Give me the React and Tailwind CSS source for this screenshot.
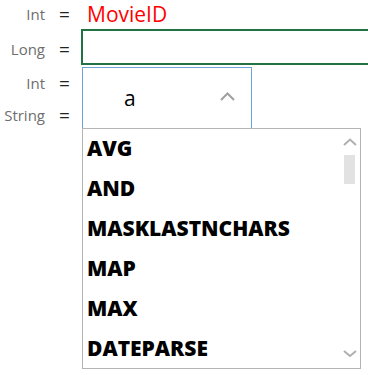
import React from "react";

function Label({ children }) {
  return (
    <div className="flex items-center">
      <div className="w-[45px] text-right text-[15px] text-[#6e6e6e]">{children}</div>
      <div className="w-[36px] pl-[14px] text-[19px] leading-none text-[#222]">=</div>
    </div>
  );
}

export default function App() {
  return (
    <div className="relative h-[375px] w-[368px] overflow-hidden bg-white font-['Open_Sans',sans-serif]">
      <div className="flex h-[29px] items-center">
        <Label>Int</Label>
        <div className="pl-[6px] text-[21px] leading-none text-[#ff0000]">MovieID</div>
      </div>
      <div className="flex h-[36px] items-center">
        <div className="pt-[4px]"><Label>Long</Label></div>
        <div className="h-[36px] flex-1 border-2 border-r-0 border-[#217346]" />
      </div>
      <div className="mt-[2px] flex">
        <div className="flex flex-col">
          <div className="flex h-[32px] items-center"><Label>Int</Label></div>
          <div className="flex h-[33px] items-center"><Label>String</Label></div>
        </div>
        <div className="ml-[1px] flex h-[70px] w-[170px] items-start border border-[#6aa3d5]">
          <div className="flex h-[60px] w-full items-center">
            <span className="ml-[41px] text-[21px] leading-none text-black">a</span>
            <svg className="ml-auto mr-[16px] mt-[-4px]" width="15" height="9" viewBox="0 0 15 9">
              <path d="M1 8 L7.5 1.5 L14 8" fill="none" stroke="#a0a0a0" strokeWidth="2" />
            </svg>
          </div>
        </div>
      </div>
      <div className="absolute left-[82px] top-[128px] flex h-[241px] w-[279px] border border-[#b4b4b4] bg-white">
        <div className="flex flex-1 flex-col pl-[4px]">
          {["AVG", "AND", "MASKLASTNCHARS", "MAP", "MAX", "DATEPARSE"].map((t) => (
            <div key={t} className="flex h-[40px] items-center text-[21px] font-extrabold leading-none text-black">
              {t}
            </div>
          ))}
        </div>
        <div className="flex w-[17px] flex-col items-center pr-[4px] pt-[9px]">
          <svg width="14" height="8" viewBox="0 0 14 8">
            <path d="M1 7 L7 1.5 L13 7" fill="none" stroke="#b0b0b0" strokeWidth="2" />
          </svg>
          <div className="mt-[9px] h-[29px] w-[11px] bg-[#e2e2e2]" />
          <div className="flex-1" />
          <svg className="mb-[11px]" width="14" height="7" viewBox="0 0 14 7">
            <path d="M1 1 L7 6 L13 1" fill="none" stroke="#b0b0b0" strokeWidth="2" />
          </svg>
        </div>
      </div>
    </div>
  );
}
